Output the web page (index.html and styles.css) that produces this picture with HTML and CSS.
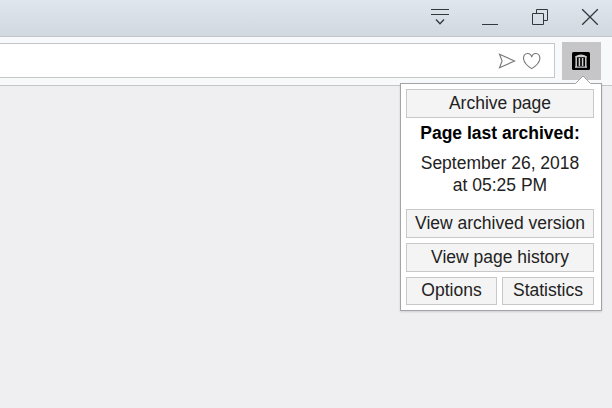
FILE: index.html
```html
<!DOCTYPE html>
<html lang="en">
<head>
<meta charset="utf-8">
<title>Browser</title>
<link rel="stylesheet" href="styles.css">
</head>
<body>
<header class="titlebar">
  <svg class="window-icon" viewBox="0 0 20 20"><path d="M1 4.5h18M1 9.5h18"/><path d="M6 14.5l4 4.2 4-4.2" stroke-width="1.3"/></svg>
  <svg class="window-icon" viewBox="0 0 20 20"><path d="M2 19.5h16"/></svg>
  <svg class="window-icon" viewBox="0 0 20 20"><path d="M2.5 8.5h11v11h-11zM6.5 8V4.5h11v11H14"/></svg>
  <svg class="window-icon" viewBox="0 0 20 20"><path d="M2.2 4.2l15.6 15.6M17.8 4.2L2.2 19.8" stroke-width="1.3"/></svg>
</header>
<div class="toolbar">
  <div class="address">
    <svg class="send" viewBox="0 0 18 18"><path d="M1.5 2.2L16.6 9 1.5 15.8 4.1 9z"/></svg>
    <svg class="heart" viewBox="0 0 18 18"><path d="M8.7 16.6C6 15 1.2 11.2.6 7 .2 3.8 1.9 1.5 4.6 1.5c2.1 0 3.6 1.4 4.1 3.6.5-2.2 2-3.6 4.1-3.6 2.7 0 4.4 2.3 4 5.5-.6 4.2-5.4 8-8.1 9.6z"/></svg>
  </div>
  <div class="extension">
    <svg class="archive" viewBox="0 0 18 18"><rect width="18" height="18" rx="1.5"/><path class="temple" d="M3 4.4Q9 .6 15 4.4v.9H3zM3 14.4h12v1.3H3z"/><path class="columns" d="M4.2 5v10M7.4 6v8M10.6 6v8M13.8 5v10"/></svg>
    <section class="popup">
      <svg class="pointer" viewBox="0 0 16 9"><path d="M.5 8.5L8 1l7.5 7.5V9H.5z" fill="#fff" stroke="none"/><path d="M.5 8.5L8 1l7.5 7.5"/></svg>
      <button>Archive page</button>
      <h1>Page last archived:</h1>
      <p>September 26, 2018<br>at 05:25 PM</p>
      <div class="actions">
        <button>View archived version</button>
        <button>View page history</button>
        <div class="pair"><button>Options</button><button>Statistics</button></div>
      </div>
    </section>
  </div>
</div>
</body>
</html>
```
FILE: styles.css
```css
* { box-sizing: border-box; }
body {
  margin: 0;
  height: 408px;
  overflow: hidden;
  background: #efeff1;
  font: 17.5px/22px "Liberation Sans", Arial, sans-serif;
  color: #222;
}
svg { display: block; fill: none; }
.titlebar {
  height: 37px;
  padding: 5px 12px 0 0;
  display: flex;
  justify-content: flex-end;
  gap: 30px;
  background: linear-gradient(#dfe6ed, #d2d8e0);
  border-bottom: 1px solid #c4c6c8;
}
.window-icon { width: 20px; height: 20px; stroke: #34383c; }
.toolbar {
  height: 49px;
  padding: 5px 11px 0 0;
  display: flex;
  gap: 7px;
  background: #f8f9fb;
  border-bottom: 1px solid #c5c6c8;
}
.address {
  flex: 1;
  height: 35px;
  margin-top: 1px;
  padding-right: 13px;
  display: flex;
  align-items: center;
  justify-content: flex-end;
  gap: 7px;
  background: #fff;
  border: 1px solid #c5c7c7;
  border-left: 0;
}
.send, .heart { width: 18px; height: 18px; stroke: #777; stroke-width: 1.1; }
.extension {
  position: relative;
  width: 39px;
  height: 38px;
  padding: 10px 0 0 10px;
  background: #c6c6c8;
}
.archive { width: 18px; height: 18px; fill: #000; }
.temple { fill: #ccc; }
.columns { stroke: #ccc; stroke-width: 1.5; }
.popup {
  position: absolute;
  top: 41px;
  right: -1px;
  width: 202px;
  height: 228px;
  padding: 5px 7px 5px 5px;
  background: #fff;
  border: 1px solid #a3a4a7;
  box-shadow: 0 1px 2px #0002;
  text-align: center;
}
.pointer {
  position: absolute;
  top: -9px;
  right: 10px;
  width: 16px;
  height: 9px;
  stroke: #a3a4a7;
}
button {
  display: block;
  width: 100%;
  height: 29px;
  padding: 0 0 2px;
  font: inherit;
  color: inherit;
  white-space: nowrap;
  background: #f4f4f4;
  border: 1px solid #c8c8c8;
  border-radius: 0;
}
h1 { margin: 4px 0 8px; font: bold 17.5px/22px "Liberation Sans", Arial, sans-serif; color: #000; }
p { margin: 0 0 13px; }
.actions { display: grid; gap: 5px; }
.pair { display: grid; grid-template-columns: 91px 92px; gap: 5px; }
.pair button { height: 28px; }
```
